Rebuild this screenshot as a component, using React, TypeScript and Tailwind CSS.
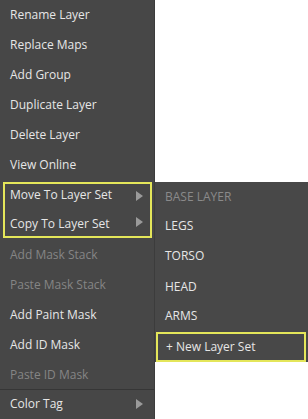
import React from "react";

type Item = { label: string; disabled?: boolean; arrow?: boolean };

const top: Item[] = [
  { label: "Rename Layer" },
  { label: "Replace Maps" },
  { label: "Add Group" },
  { label: "Duplicate Layer" },
  { label: "Delete Layer" },
  { label: "View Online" },
];
const bottom: Item[] = [
  { label: "Add Mask Stack", disabled: true },
  { label: "Paste Mask Stack", disabled: true },
  { label: "Add Paint Mask" },
  { label: "Add ID Mask" },
  { label: "Paste ID Mask", disabled: true },
];

const Tri = ({ left }: { left: string }) => (
  <svg width="7" height="10" viewBox="0 0 7 10" className={`absolute ${left} top-1/2 -translate-y-1/2`}>
    <polygon points="0,0 7,5 0,10" fill="#9a9a9a" />
  </svg>
);

const Row = ({ item }: { item: Item }) => (
  <div
    className={`relative h-[30px] flex items-center pl-[10px] ${
      item.disabled ? "text-[#858585]" : "text-[#e6e6e6]"
    }`}
  >
    {item.label}
    {item.arrow && <Tri left="left-[136px]" />}
  </div>
);

export default function App() {
  return (
    <div
      className="w-[308px] h-[419px] bg-white flex overflow-hidden text-[12px]"
      style={{ fontFamily: '"Open Sans", "Noto Sans", sans-serif' }}
    >
      <div className="w-[155px] h-full bg-[#474747] border-r border-[#3c3c3c] flex flex-col">
        <div>
          {top.map((i) => (
            <Row key={i.label} item={i} />
          ))}
        </div>
        <div className="mt-[2px] ml-[3px] mr-[2px] h-[56px] border-2 border-[#e4e65a] text-[#e6e6e6]">
          <div className="relative h-[24px] flex items-center pl-[5px] pb-[3px]">
            Move To Layer Set
            <Tri left="left-[131px]" />
          </div>
          <div className="relative h-[28px] flex items-center pl-[5px] pt-[3px]">
            Copy To Layer Set
            <Tri left="left-[131px]" />
          </div>
        </div>
        <div className="mt-[2px]">
          {bottom.map((i) => (
            <Row key={i.label} item={i} />
          ))}
        </div>
        <div className="h-[1px] bg-[#363636] -mt-[1px]" />
        <Row item={{ label: "Color Tag", arrow: true }} />
      </div>
      <div className="flex-1 flex flex-col">
        <div className="h-[182px] bg-white" />
        <div className="h-[180px] bg-[#484848] text-[#e6e6e6] pr-[2px]">
          <div className="h-[28px] flex items-center pl-[10px] text-[#8a8a8a] pt-[1px]">BASE LAYER</div>
          <div className="h-[30px] flex items-center pl-[10px] pt-[2px]">LEGS</div>
          <div className="h-[30px] flex items-center pl-[10px] pt-[2px]">TORSO</div>
          <div className="h-[30px] flex items-center pl-[10px] pt-[3px]">HEAD</div>
          <div className="h-[30px] flex items-center pl-[10px] pt-[2px]">ARMS</div>
          <div className="h-[30px] mt-[2px] ml-[1px] border-2 border-[#e4e65a] flex items-center pl-[8px] pb-[1px]">
            + New Layer Set
          </div>
        </div>
        <div className="flex-1 bg-white" />
      </div>
    </div>
  );
}
